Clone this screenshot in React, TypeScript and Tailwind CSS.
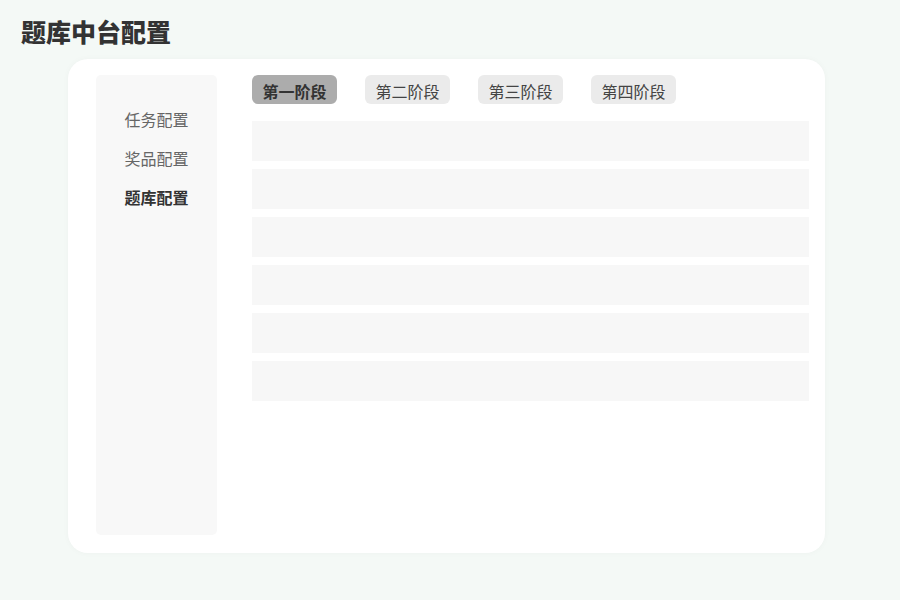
import React from 'react';

const menu = ['任务配置', '奖品配置', '题库配置'];
const stages = ['第一阶段', '第二阶段', '第三阶段', '第四阶段'];

export default function App() {
    const activeMenu = 2;
    const activeStage = 0;

    return (
        <div
            className="min-h-screen w-full bg-[#f4f9f6] pt-[14px]"
            style={{ fontFamily: '"Noto Sans CJK SC", "Noto Sans", sans-serif' }}
        >
            <h1 className="pl-[21px] text-[25px] leading-[34px] font-black text-[#333333]">题库中台配置</h1>

            <div className="ml-[68px] mt-[11px] flex h-[494px] w-[757px] rounded-[20px] bg-white pt-[16px] pr-[16px] pb-[18px] pl-[28px] shadow-[0_0_6px_rgba(0,0,0,0.03)]">
                <div className="flex w-[121px] flex-col items-center gap-[15px] rounded-[5px] bg-[#f8f8f8] pt-[32px]">
                    {menu.map((item, index) => (
                        <div
                            key={item}
                            className={
                                index === activeMenu
                                    ? 'text-[16px] leading-[24px] font-bold text-[#333333]'
                                    : 'text-[16px] leading-[24px] text-[#666666]'
                            }
                        >
                            {item}
                        </div>
                    ))}
                </div>

                <div className="ml-[35px] flex flex-1 flex-col">
                    <div className="flex gap-[28px]">
                        {stages.map((stage, index) => (
                            <div
                                key={stage}
                                className={
                                    index === activeStage
                                        ? 'flex h-[29px] w-[85px] items-center justify-center rounded-[6px] bg-[#acacac] pt-[2px] text-[16px] font-bold text-[#333333]'
                                        : 'flex h-[29px] w-[85px] items-center justify-center rounded-[6px] bg-[#ebebeb] pt-[2px] text-[16px] text-[#444444]'
                                }
                            >
                                {stage}
                            </div>
                        ))}
                    </div>

                    <div className="mt-[17px] flex flex-col gap-[8px]">
                        {[1, 2, 3, 4, 5, 6].map((row) => (
                            <div key={row} className="h-[40px] w-full bg-[#f7f7f7]" />
                        ))}
                    </div>
                </div>
            </div>
        </div>
    );
}
